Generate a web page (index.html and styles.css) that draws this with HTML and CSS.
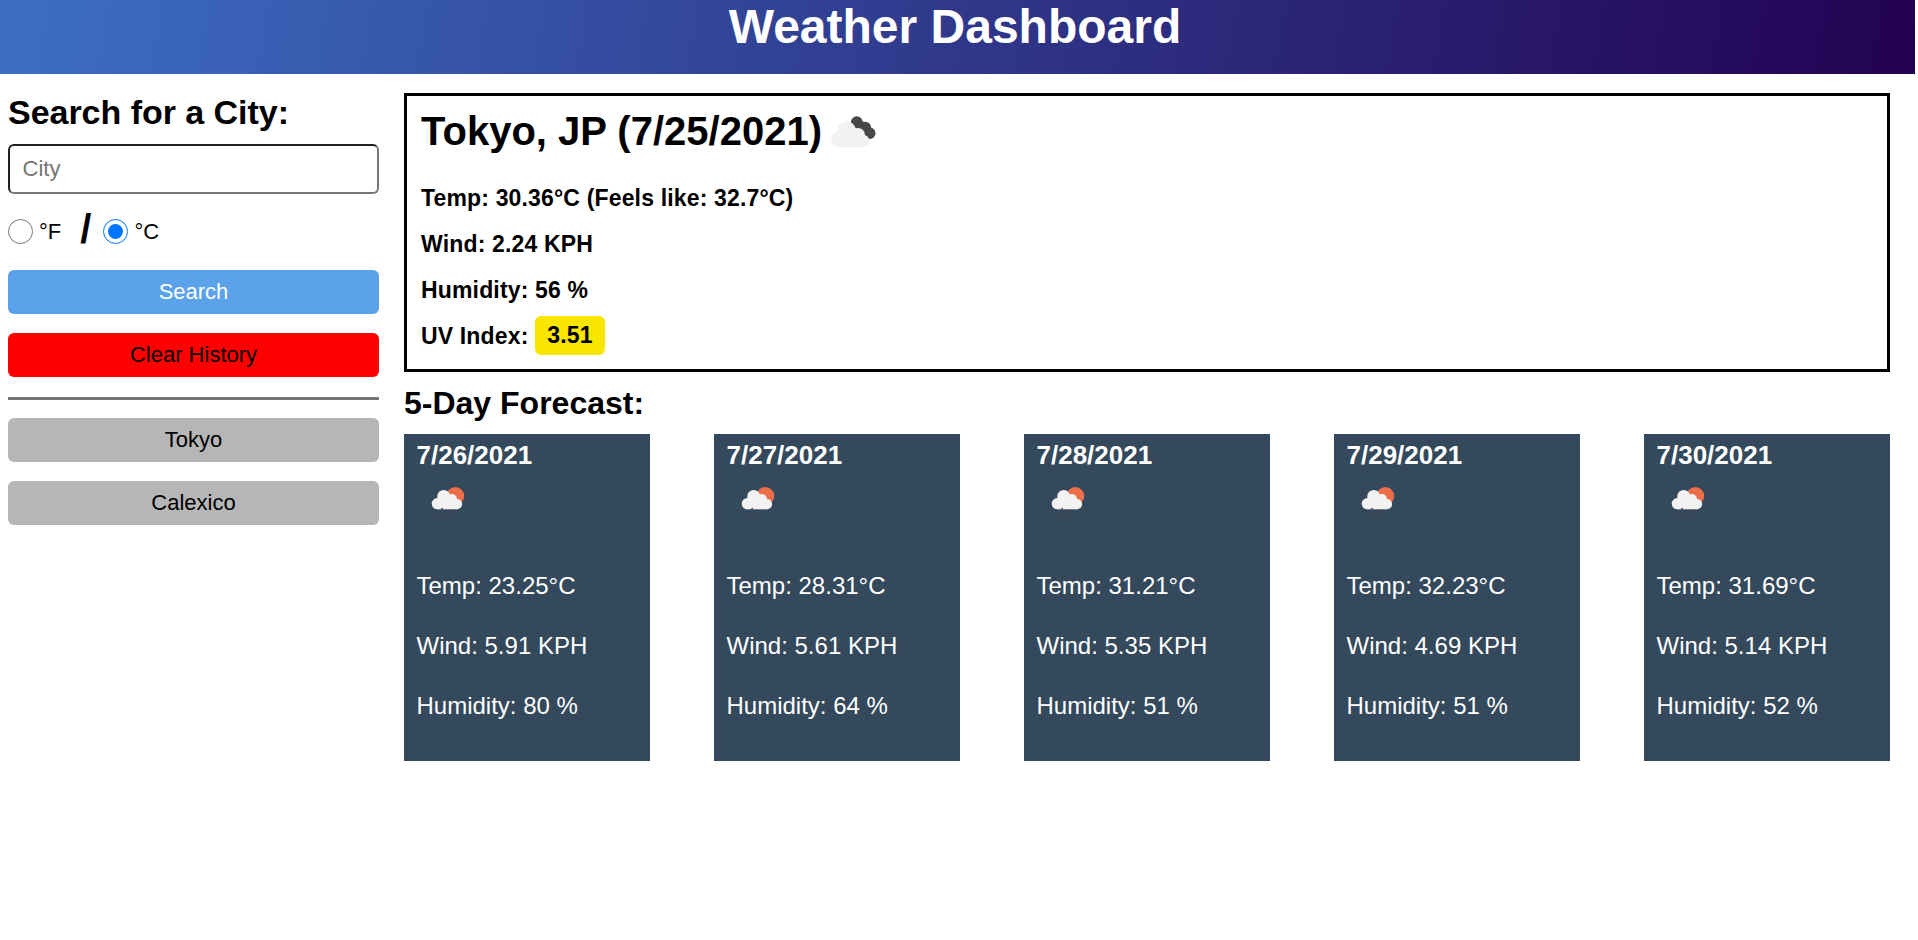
FILE: index.html
```html
<!DOCTYPE html>
<html lang="en">
<head>
<meta charset="utf-8">
<title>Weather Dashboard</title>
<link rel="stylesheet" href="styles.css">
</head>
<body>
<svg width="0" height="0" class="sprite" aria-hidden="true">
  <symbol id="rain-sun" viewBox="0 0 34 34">
    <circle cx="24.3" cy="10" r="9" fill="#eb6e4b"/>
    <g fill="#f2f2f2"><circle cx="6.3" cy="17.7" r="5.6"/><circle cx="12.7" cy="10.4" r="6.4"/><circle cx="21" cy="12.9" r="4.9"/><circle cx="26" cy="18.2" r="5.1"/><path d="M6.3 14h19.7v9.3H6.3z"/></g>
    <path d="M11.3 22.4l-1 1.6M9 27.4l-1.200 2.200M14.200 26.200l-.8 1.400M12.800 29.800l-1 1.800M19.700 24.800l-1 2M17.300 29l-1.300 2.500" stroke="#48484a" stroke-width="1.400" stroke-linecap="round"/>
  </symbol>
</svg>
<header class="header"><h1 class="title">Weather Dashboard</h1></header>
<div class="layout">
  <aside class="sidebar">
    <h2 class="search-title">Search for a City:</h2>
    <input class="city-input" type="text" placeholder="City">
    <div class="units">
      <input class="unit-radio" type="radio" name="unit" id="unit-f"><label class="unit-label" for="unit-f">°F</label>
      <span class="slash">/</span>
      <input class="unit-radio" type="radio" name="unit" id="unit-c" checked><label class="unit-label" for="unit-c">°C</label>
    </div>
    <button class="btn btn-search">Search</button>
    <button class="btn btn-clear">Clear History</button>
    <hr class="divider">
    <button class="btn">Tokyo</button>
    <button class="btn">Calexico</button>
  </aside>
  <main class="main">
    <section class="current">
      <div class="current-head">
        <h2 class="current-title">Tokyo, JP (7/25/2021)</h2>
        <svg class="current-icon" viewBox="0 0 46 33">
          <g fill="#48484a"><circle cx="25.8" cy="6.2" r="5.9"/><circle cx="34.3" cy="11.3" r="5.6"/><circle cx="38.800" cy="17.200" r="5.700"/><path d="M22 10l8-6 12 9-5 9z"/></g>
          <g fill="#f2f2f2"><circle cx="7.8" cy="23.5" r="7.8"/><circle cx="15.6" cy="14.500" r="9.300"/><circle cx="27" cy="19" r="7"/><circle cx="32" cy="25" r="6.300"/><path d="M8 18h24v13.300H8z"/></g>
        </svg>
      </div>
      <p class="stat stat-temp">Temp: 30.36°C (Feels like: 32.7°C)</p>
      <p class="stat">Wind: 2.24 KPH</p>
      <p class="stat">Humidity: 56 %</p>
      <p class="stat stat-uv">UV Index: <span class="uv">3.51</span></p>
    </section>
    <h2 class="forecast-title">5-Day Forecast:</h2>
    <section class="forecast">
      <article class="card"><h3 class="date">7/26/2021</h3><svg class="card-icon"><use href="#rain-sun"/></svg><p class="line">Temp: 23.25°C</p><p class="line">Wind: 5.91 KPH</p><p class="line">Humidity: 80 %</p></article>
      <article class="card"><h3 class="date">7/27/2021</h3><svg class="card-icon"><use href="#rain-sun"/></svg><p class="line">Temp: 28.31°C</p><p class="line">Wind: 5.61 KPH</p><p class="line">Humidity: 64 %</p></article>
      <article class="card"><h3 class="date">7/28/2021</h3><svg class="card-icon"><use href="#rain-sun"/></svg><p class="line">Temp: 31.21°C</p><p class="line">Wind: 5.35 KPH</p><p class="line">Humidity: 51 %</p></article>
      <article class="card"><h3 class="date">7/29/2021</h3><svg class="card-icon"><use href="#rain-sun"/></svg><p class="line">Temp: 32.23°C</p><p class="line">Wind: 4.69 KPH</p><p class="line">Humidity: 51 %</p></article>
      <article class="card"><h3 class="date">7/30/2021</h3><svg class="card-icon"><use href="#rain-sun"/></svg><p class="line">Temp: 31.69°C</p><p class="line">Wind: 5.14 KPH</p><p class="line">Humidity: 52 %</p></article>
    </section>
  </main>
</div>
</body>
</html>
```
FILE: styles.css
```css
* { box-sizing: border-box; margin: 0; padding: 0; }
body { font-family: "Liberation Sans", Arial, sans-serif; color: #000; background: #fff; }
.sprite { display: block; }
.header { width: 1915px; height: 74px; background: linear-gradient(100deg, #3c6fc4, #230152); }
.title { color: #fff; font-size: 48px; line-height: 54px; text-align: center; padding-right: 5px; }
.layout { display: flex; align-items: flex-start; gap: 25px; padding: 19px 28px 0 8px; }
.sidebar { width: 371px; flex: none; display: flex; flex-direction: column; }
.search-title { font-size: 34px; line-height: 38px; letter-spacing: -.03px; margin-bottom: 13px; }
.city-input { height: 50px; border: 2px inset #767676; border-radius: 6px; padding: 0 12.5px; font: 22px "Liberation Sans", Arial, sans-serif; }
.city-input::placeholder { color: #757575; }
.units { display: flex; align-items: center; height: 76px; padding-bottom: 2px; }
.unit-radio { width: 25px; height: 25px; }
.unit-label { font-size: 22px; line-height: 25px; padding-left: 6px; }
.slash { font-size: 40px; line-height: 46px; font-weight: bold; margin: -4px 12px 0 19px; }
.btn { height: 44px; margin-bottom: 19px; border: 0; border-radius: 6px; background: #b6b6b6; color: #000; font: 22px "Liberation Sans", Arial, sans-serif; padding-bottom: 1px; }
.btn-search { background: #5aa2ea; color: #fff; }
.btn-clear { background: #f00; }
.divider { border: 0; height: 3px; background: #767676; margin: 1px 0 18px; }
.main { flex: 1; }
.current { height: 279px; border: 3px solid #000; padding: 12px 14px 0; }
.current-head { display: flex; height: 46px; }
.current-title { font-size: 40px; line-height: 46px; }
.current-icon { width: 46px; height: 33px; margin: 8px 0 0 9px; }
.stat { font-size: 23px; font-weight: bold; line-height: 46px; letter-spacing: .16px; }
.stat-temp { margin-top: 21px; }
.stat-uv { display: flex; white-space: pre; }
.uv { align-self: flex-start; margin-top: 3px; width: 70px; height: 39px; line-height: 39px; text-align: center; background: #f8e600; border-radius: 6px; }
.forecast-title { font-size: 32px; line-height: 36px; margin: 13px 0; }
.forecast { display: flex; justify-content: space-between; }
.card { width: 246px; height: 327px; background: #34495b; color: #fff; padding: 5px 12.5px 0; }
.date { font-size: 26px; line-height: 32px; }
.card-icon { display: block; width: 34px; height: 34px; margin: 15px 0 36px 14.5px; }
.line { font-size: 24px; line-height: 60px; }
```
